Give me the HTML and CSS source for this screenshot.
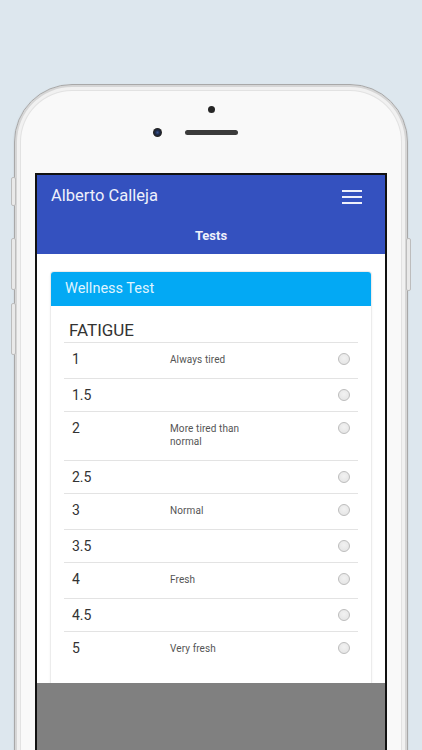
FILE: index.html
```html
<!DOCTYPE html>
<html>
<head>
<meta charset="utf-8">
<link rel="stylesheet" href="styles.css">
</head>
<body>
<div class="phone">
  <span class="btn btn-mute"></span>
  <span class="btn btn-vol1"></span>
  <span class="btn btn-vol2"></span>
  <span class="btn btn-power"></span>
  <div class="bezel">
    <div class="sensor"></div>
    <div class="cam-row">
      <div class="camera"></div>
      <div class="speaker"></div>
      <div></div>
    </div>
  </div>
  <div class="screen">
    <header class="appbar">
      <div class="topbar">
        <span class="user">Alberto Calleja</span>
        <span class="menu"><i></i><i></i><i></i></span>
      </div>
      <div class="subtitle">Tests</div>
    </header>
    <main class="content">
      <section class="card">
        <div class="card-head">Wellness Test</div>
        <div class="card-body">
          <h2 class="section">FATIGUE</h2>
          <div class="row"><span class="num">1</span><span class="desc">Always tired</span><span class="radio"></span></div>
          <div class="row"><span class="num">1.5</span><span class="desc empty"></span><span class="radio"></span></div>
          <div class="row"><span class="num">2</span><span class="desc">More tired than normal</span><span class="radio"></span></div>
          <div class="row"><span class="num">2.5</span><span class="desc empty"></span><span class="radio"></span></div>
          <div class="row"><span class="num">3</span><span class="desc">Normal</span><span class="radio"></span></div>
          <div class="row"><span class="num">3.5</span><span class="desc empty"></span><span class="radio"></span></div>
          <div class="row"><span class="num">4</span><span class="desc">Fresh</span><span class="radio"></span></div>
          <div class="row"><span class="num">4.5</span><span class="desc empty"></span><span class="radio"></span></div>
          <div class="row"><span class="num">5</span><span class="desc">Very fresh</span><span class="radio"></span></div>
        </div>
      </section>
    </main>
    <div class="footer"></div>
  </div>
</div>
</body>
</html>
```
FILE: styles.css
```css
html, body {
  margin: 0;
  padding: 0;
  height: 750px;
  overflow: hidden;
}
body {
  background: #dde7ee;
  font-family: Roboto, "Liberation Sans", sans-serif;
}
.phone {
  position: relative;
  margin: 84px 0 0 14px;
  width: 392px;
  height: 760px;
  background: #f9f9f9;
  border: 1px solid #a8a8a8;
  border-radius: 58px;
  box-shadow: inset 0 0 0 2px #d6d6d6, inset 0 0 0 5px #f1f1f1, inset 0 0 0 6px #e2e2e2, 0 1px 2px rgba(0,0,0,0.12);
  display: flex;
  flex-direction: column;
  align-items: center;
}
.btn {
  position: absolute;
  width: 3px;
  background: #e9e9e9;
  border: 1px solid #bdbdbd;
  border-radius: 2px;
}
.btn-mute { left: -4px; top: 92px; height: 27px; }
.btn-vol1 { left: -4px; top: 153px; height: 50px; }
.btn-vol2 { left: -4px; top: 218px; height: 50px; }
.btn-power { right: -4px; top: 153px; height: 51px; }

.bezel {
  width: 100%;
  height: 88px;
  display: flex;
  flex-direction: column;
  align-items: center;
}
.sensor {
  margin-top: 21px;
  width: 7px;
  height: 7px;
  border-radius: 50%;
  background: #262626;
}
.cam-row {
  margin-top: 15px;
  width: 100%;
  display: grid;
  grid-template-columns: 1fr auto 1fr;
  align-items: center;
}
.camera {
  justify-self: end;
  margin-right: 23px;
  width: 9px;
  height: 9px;
  border-radius: 50%;
  background: radial-gradient(circle at 50% 50%, #3a5590 0, #1d2a48 35%, #222 62%, #3a3a3a 100%);
}
.speaker {
  width: 53px;
  height: 5px;
  border-radius: 3px;
  background: #3b3b3b;
}
.screen {
  width: 348px;
  height: 640px;
  border: 2px solid #111;
  background: #fff;
  display: flex;
  flex-direction: column;
}
.appbar {
  background: #3451bf;
  color: #eef0fb;
  height: 79px;
  flex: none;
}
.topbar {
  height: 42px;
  padding: 0 23px 0 14px;
  display: flex;
  align-items: center;
  justify-content: space-between;
}
.user {
  font-size: 16.5px;
  line-height: 20px;
  margin-top: -1px;
}
.menu {
  width: 20px;
  display: flex;
  flex-direction: column;
  gap: 4px;
  margin-top: 1px;
}
.menu i {
  display: block;
  height: 2px;
  background: #eef0fb;
}
.subtitle {
  height: 37px;
  line-height: 38px;
  text-align: center;
  font-size: 13px;
  font-weight: 700;
}
.content {
  height: 429px;
  flex: none;
  overflow: hidden;
  padding: 18px 14px 0;
  box-sizing: border-box;
}
.card {
  background: #fff;
  border-radius: 3px;
  box-shadow: 0 0 0 1px #ececec, 0 1px 3px rgba(0,0,0,0.12);
}
.card-head {
  height: 34px;
  background: #03a9f4;
  border-radius: 3px 3px 0 0;
  color: #dff4ff;
  font-size: 14.5px;
  line-height: 34px;
  padding-left: 14px;
}
.card-body {
  padding: 0 13px 30px;
}
.section {
  margin: 0;
  padding: 14px 0 2px 5px;
  font-size: 17px;
  line-height: 20px;
  font-weight: 400;
  color: #333;
}
.row {
  display: flex;
  align-items: flex-start;
  border-top: 1px solid #e3e3e3;
  padding: 6px 8px 6px 8px;
}
.num {
  width: 98px;
  flex: none;
  font-size: 14px;
  line-height: 20px;
  color: #333;
}
.desc {
  width: 80px;
  flex: none;
  font-size: 10px;
  line-height: 13px;
  padding: 4px 0 6px;
  color: #555;
  letter-spacing: 0.1px;
}
.desc.empty {
  padding: 0;
}
.radio {
  margin-left: auto;
  margin-top: 4px;
  width: 10px;
  height: 10px;
  border-radius: 50%;
  border: 1px solid #bdbdbd;
  background: radial-gradient(circle at 50% 40%, #f2f2f2 0, #e2e2e2 100%);
}
.footer {
  flex: 1;
  background: #808080;
}
```
